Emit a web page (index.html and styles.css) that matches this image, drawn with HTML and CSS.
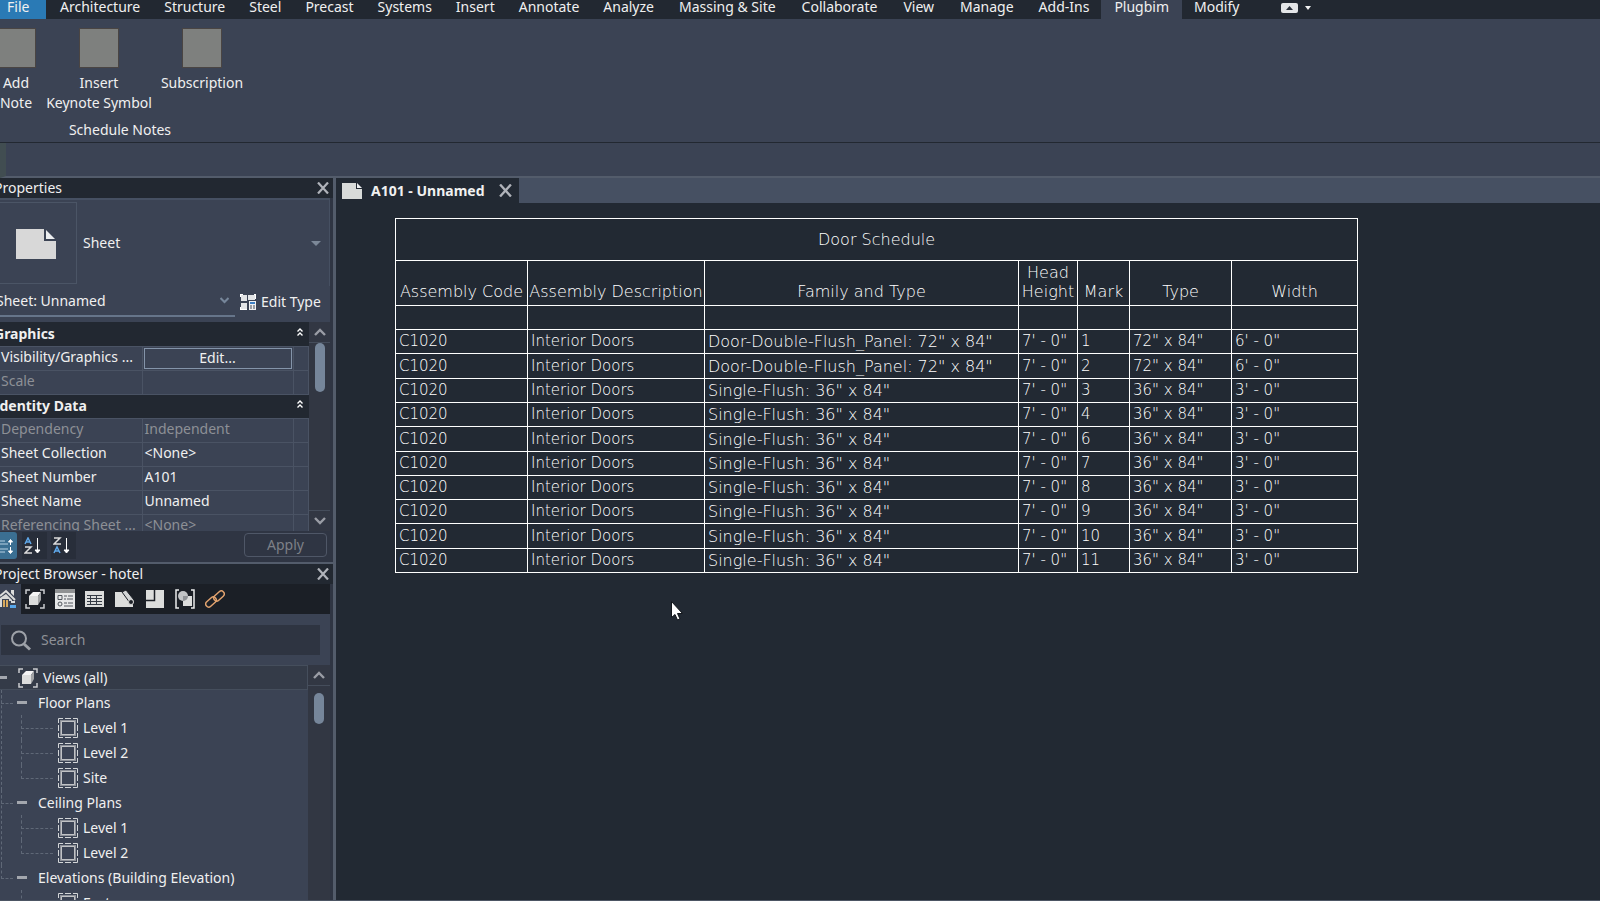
FILE: index.html
```
<!DOCTYPE html>
<html lang="en">
<head>
    <meta charset="UTF-8">
    <meta name="viewport" content="width=device-width, initial-scale=1.0">
    <title>Door Schedule - A101</title>
    <link rel="stylesheet" href="styles.css">
</head>
<body>
    <!-- Shared icons -->
    <svg class="defs" width="0" height="0">
        <symbol id="close" viewBox="0 0 12 12"><path d="M1 0.500L11 11.500M11 0.500L1 11.500" fill="none" stroke="#b0b3ba" stroke-width="2.200"/></symbol>
        <symbol id="up" viewBox="0 0 12 8"><path d="M1 7L6 2L11 7" fill="none" stroke="#9a9da5" stroke-width="2.400"/></symbol>
        <symbol id="down" viewBox="0 0 12 8"><path d="M1 1L6 6L11 1" fill="none" stroke="#9a9da5" stroke-width="2.400"/></symbol>
        <symbol id="collapse" viewBox="0 0 6 8"><path d="M0.500 3.500L3 1L5.500 3.500M0.500 7.500L3 5L5.500 7.500" fill="none" stroke="#fff" stroke-width="1.400"/></symbol>
        <symbol id="view3d" viewBox="0 0 20 20">
            <path d="M1 5V1H5M15 1H19V5M19 15V19H15M5 19H1V15" fill="none" stroke="#c9cbce" stroke-width="1.500"/>
            <path d="M4 7L8 3H16L13 7Z" fill="#f4f4f4"/>
            <path d="M4 7H13V16H4Z" fill="#dcdddc"/>
            <path d="M13 7L16 3V11L13 16Z" fill="#a2a4a6"/>
        </symbol>
        <symbol id="plan" viewBox="0 0 20 20">
            <path d="M0.500 5V0.500H5M7 0.500H13M15 0.500H19.500V5M19.500 7V13M19.500 15V19.500H15M13 19.500H7M5 19.500H0.500V15M0.500 13V7" fill="none" stroke="#d3d6d8"/>
            <path d="M3 3H17V17H3Z" fill="none" stroke="#8c9098" stroke-width="2"/>
            <path d="M3.500 3.500H16.500V16.500H3.500Z" fill="none" stroke="#c0c2c5"/>
        </symbol>
    </svg>

    <nav class="ribbon-tabs">
        <a class="file" href="#">File</a>
        <a href="#">Architecture</a>
        <a href="#">Structure</a>
        <a href="#">Steel</a>
        <a href="#">Precast</a>
        <a href="#">Systems</a>
        <a href="#">Insert</a>
        <a href="#">Annotate</a>
        <a href="#">Analyze</a>
        <a class="wide" href="#">Massing &amp; Site</a>
        <a class="wide" href="#">Collaborate</a>
        <a class="wide" href="#">View</a>
        <a class="wide" href="#">Manage</a>
        <a href="#">Add-Ins</a>
        <a class="wide active" href="#">Plugbim</a>
        <a href="#">Modify</a>
        <button class="ribbon-toggle" aria-label="Minimize ribbon">
            <svg width="30" height="10" viewBox="0 0 30 10"><rect width="17" height="10" rx="2" fill="#e4e6e8"/><path d="M5 7L8.500 3L12 7Z" fill="#2b313b"/><path d="M24 3H30L27 7Z" fill="#f2f2f2"/></svg>
        </button>
    </nav>

    <section class="ribbon">
        <div class="ribbon-buttons">
            <button class="add-note"><i class="thumb"></i>Add<br>Note</button>
            <button class="keynote"><i class="thumb"></i>Insert<br>Keynote Symbol</button>
            <button class="subscription"><i class="thumb"></i>Subscription</button>
        </div>
        <div class="ribbon-title">Schedule Notes</div>
    </section>

    <div class="options-bar"></div>

    <main class="workspace">
        <aside class="sidebar">
            <!-- Properties palette -->
            <section class="properties">
                <header class="panel-title">
                    <h2>Properties</h2>
                    <button aria-label="Close properties"><svg width="12" height="12"><use href="#close"/></svg></button>
                </header>
                <div class="panel-body">
                    <button class="type-selector">
                        <span class="preview">
                            <svg width="40" height="30" viewBox="0 0 40 30"><path d="M0 0H28V12H40V30H0Z" fill="#d8d8d8"/><path d="M30 1L39 10H30Z" fill="#eceef0"/></svg>
                        </span>
                        <span class="type-name">Sheet</span>
                        <svg width="10" height="5" viewBox="0 0 10 5"><path d="M0 0H10L5 5Z" fill="#7c8898"/></svg>
                    </button>
                    <div class="instance">
                        <div class="instance-box">
                            <select aria-label="Sheet"><option>Sheet: Unnamed</option></select>
                            <svg class="caret" width="9" height="7" viewBox="0 0 9 7"><path d="M0.500 1L4.500 5L8.500 1" fill="none" stroke="#76869a" stroke-width="2"/></svg>
                        </div>
                        <button class="edit-type">
                            <svg width="17" height="16" viewBox="0 0 17 16">
                                <path d="M1 1H7V7H1ZM8 1H15V6H8ZM1 9H7V15H1Z" fill="#e2e4e6"/>
                                <path d="M0 0H3V1H1V3H0ZM14 0H16V5H15V1H14ZM0 13H1V15H7V16H0Z" fill="#fff"/>
                                <path d="M9 7H16V16H9Z" fill="#eef0f2"/>
                                <path d="M10 8H15V10H10Z" fill="#3c7fc4"/>
                                <path d="M10 12H12M13 12H15M10 14H12M13 14H15" stroke="#444a55"/>
                            </svg>
                            Edit Type
                        </button>
                    </div>
                    <div class="scroll-area props-area">
                        <table class="props">
                            <colgroup><col class="c-name"><col class="c-value"><col class="c-mark"></colgroup>
                            <tbody>
                                <tr class="group"><th colspan="3"><div>Graphics<svg width="6" height="8"><use href="#collapse"/></svg></div></th></tr>
                                <tr><td>Visibility/Graphics ...</td><td class="has-button"><button class="edit">Edit...</button></td><td></td></tr>
                                <tr class="readonly"><td>Scale</td><td></td><td></td></tr>
                                <tr class="group"><th colspan="3"><div>Identity Data<svg width="6" height="8"><use href="#collapse"/></svg></div></th></tr>
                                <tr class="readonly"><td>Dependency</td><td>Independent</td><td></td></tr>
                                <tr><td>Sheet Collection</td><td>&lt;None&gt;</td><td></td></tr>
                                <tr><td>Sheet Number</td><td>A101</td><td></td></tr>
                                <tr><td>Sheet Name</td><td>Unnamed</td><td></td></tr>
                                <tr class="readonly"><td>Referencing Sheet ...</td><td>&lt;None&gt;</td><td></td></tr>
                            </tbody>
                        </table>
                        <div class="scrollbar">
                            <span class="arrow"><svg width="12" height="8"><use href="#up"/></svg></span>
                            <span class="handle long"></span>
                            <span class="arrow bottom"><svg width="12" height="8"><use href="#down"/></svg></span>
                        </div>
                    </div>
                </div>
                <footer class="props-footer">
                    <button class="sort on" aria-label="Sort by category">
                        <svg width="17" height="18" viewBox="0 0 17 18"><path d="M0 4H5M0 7H8M0 12H8M0 15H5" stroke="#b9d3e4" fill="none"/><path d="M10.500 3V8M8.500 5L10.500 2.500L12.500 5ZM10.500 10V15M8.500 14L10.500 16.500L12.500 14Z" stroke="#fff" fill="#fff"/></svg>
                    </button>
                    <button class="sort" aria-label="Sort ascending">
                        <svg width="18" height="18" viewBox="0 0 18 18"><path d="M1 7L4 1L7 7M2 5H6" stroke="#5fa8ea" stroke-width="1.500" fill="none"/><path d="M1 10H7L1 16H8" stroke="#dcdcdc" stroke-width="1.500" fill="none"/><path d="M13.500 1V15M11 13L13.500 16L16 13Z" stroke="#fff" fill="#fff"/></svg>
                    </button>
                    <button class="sort" aria-label="Sort descending">
                        <svg width="18" height="18" viewBox="0 0 18 18"><path d="M1 1H7L1 7H8" stroke="#dcdcdc" stroke-width="1.500" fill="none"/><path d="M1 16L4 10L7 16M2 14H6" stroke="#5fa8ea" stroke-width="1.500" fill="none"/><path d="M13.500 1V15M11 13L13.500 16L16 13Z" stroke="#fff" fill="#fff"/></svg>
                    </button>
                    <button class="apply" disabled>Apply</button>
                </footer>
            </section>

            <!-- Project browser -->
            <section class="browser">
                <header class="panel-title">
                    <h2>Project Browser - hotel</h2>
                    <button aria-label="Close project browser"><svg width="12" height="12"><use href="#close"/></svg></button>
                </header>
                <div class="browser-tools">
                    <button class="home" aria-label="All">
                        <svg width="17" height="20" viewBox="0 0 17 20"><path d="M0 7L6 2L15 11" fill="none" stroke="#dcdddc" stroke-width="2"/><path d="M11 1H14V7L11 4Z" fill="#dcdddc"/><path d="M0 9L6 5L12 11V18H0Z" fill="#d8d9d8"/><path d="M2 10H9V18H2Z" fill="#3b4353"/><path d="M3 11H5V18H3ZM6 11H8V18H6Z" fill="#d8a95c"/><path d="M9 12H17V20H9Z" fill="#3b4353"/><path d="M11 12H15V14H11Z" fill="#dcdddc"/><path d="M10 16H16V19H10Z" fill="#58a7ea"/></svg>
                    </button>
                    <button aria-label="Views"><svg width="20" height="20"><use href="#view3d"/></svg></button>
                    <button aria-label="Legends">
                        <svg width="20" height="20" viewBox="0 0 20 20"><path d="M0 0H20V20H0Z" fill="#e6e7e8"/><path d="M0 0H20V4H0Z" fill="#8f9193"/><path d="M3 6.500H7V10.500H3ZM9 7H12M13 7H18M9 10H11M12 10H18M9 14H12M13 14H18M9 17H18" fill="none" stroke="#50555c"/><circle cx="5" cy="15" r="2" fill="none" stroke="#50555c"/></svg>
                    </button>
                    <button aria-label="Schedules">
                        <svg width="20" height="20" viewBox="0 0 20 20"><path d="M0 2H19V18H0Z" fill="#dcdddc"/><path d="M2 6.500H17M2 9.500H17M2 12.500H17M2 15.500H17M5.500 6V16M11.500 6V16" stroke="#343a44" fill="none"/></svg>
                    </button>
                    <button aria-label="Sheets">
                        <svg width="20" height="20" viewBox="0 0 20 20"><path d="M0 3H8L18 15V18H0Z" fill="#dcdddc"/><path d="M7 3L11 1L19 11V15L15 14Z" fill="#d3d5d6" stroke="#1b1f26"/><circle cx="16" cy="13" r="2.500" fill="#1b1f26" stroke="#d8d9d8"/></svg>
                    </button>
                    <button aria-label="Families">
                        <svg width="20" height="20" viewBox="0 0 20 20"><path d="M1 1H19V19H1Z" fill="#dcdddc"/><path d="M1 11.500H9.500V1" fill="none" stroke="#1b1f26" stroke-width="1.500"/></svg>
                    </button>
                    <button aria-label="Groups">
                        <svg width="20" height="20" viewBox="0 0 20 20"><path d="M4 1H1V19H4M16 1H19V19H16" fill="none" stroke="#eceded" stroke-width="1.500"/><path d="M8 7H17V17H8Z" fill="#dcdddc"/><circle cx="8" cy="7" r="5" fill="#c2c4c6"/><path d="M8 12V7H13A5 5 0 0 1 8 12Z" fill="#8f9296"/></svg>
                    </button>
                    <button aria-label="Links">
                        <svg width="20" height="20" viewBox="0 0 20 20"><g fill="none" stroke="#e2a36f" stroke-width="1.500"><rect x="8" y="4" width="12" height="6" rx="3" transform="rotate(-42 14 7)"/><rect x="0" y="10" width="12" height="6" rx="3" transform="rotate(-42 6 13)"/></g></svg>
                    </button>
                </div>
                <div class="browser-body">
                    <label class="search">
                        <svg width="22" height="21" viewBox="0 0 22 21"><circle cx="8" cy="8.500" r="7" fill="none" stroke="#9da1a8" stroke-width="2"/><path d="M13 14L19 19.500" stroke="#9da1a8" stroke-width="3"/></svg>
                        <input type="text" placeholder="Search" aria-label="Search">
                    </label>
                    <div class="scroll-area tree-area">
                        <div class="tree">
                            <div class="tree-root"><i class="minus"></i><svg width="20" height="20"><use href="#view3d"/></svg>Views (all)</div>
                            <ul class="groups">
                                <li><div class="folder"><i class="minus"></i>Floor Plans</div>
                                    <ul class="views">
                                        <li><svg width="20" height="20"><use href="#plan"/></svg>Level 1</li>
                                        <li><svg width="20" height="20"><use href="#plan"/></svg>Level 2</li>
                                        <li><svg width="20" height="20"><use href="#plan"/></svg>Site</li>
                                    </ul>
                                </li>
                                <li><div class="folder"><i class="minus"></i>Ceiling Plans</div>
                                    <ul class="views">
                                        <li><svg width="20" height="20"><use href="#plan"/></svg>Level 1</li>
                                        <li><svg width="20" height="20"><use href="#plan"/></svg>Level 2</li>
                                    </ul>
                                </li>
                                <li><div class="folder"><i class="minus"></i>Elevations (Building Elevation)</div>
                                    <ul class="views">
                                        <li><svg width="20" height="20"><use href="#plan"/></svg>East</li>
                                    </ul>
                                </li>
                            </ul>
                        </div>
                        <div class="scrollbar">
                            <span class="arrow"><svg width="12" height="8"><use href="#up"/></svg></span>
                            <span class="handle short"></span>
                        </div>
                    </div>
                </div>
            </section>
        </aside>

        <!-- Drawing area -->
        <section class="document">
            <div class="doc-tabs">
                <div class="doc-tab">
                    <svg width="20" height="16" viewBox="0 0 20 16"><path d="M0 0H14V6H20V16H0Z" fill="#d8dad9"/><path d="M15 0L20 5H15Z" fill="#eceef0"/></svg>
                    <span>A101 - Unnamed</span>
                    <button aria-label="Close tab"><svg width="13" height="13"><use href="#close"/></svg></button>
                </div>
            </div>
            <div class="canvas">
                <table class="schedule">
                    <colgroup><col class="s-code"><col class="s-desc"><col class="s-family"><col class="s-head"><col class="s-mark"><col class="s-type"><col class="s-width"></colgroup>
                    <thead>
                        <tr class="title"><th colspan="7">Door Schedule</th></tr>
                        <tr class="heads"><th>Assembly Code</th><th>Assembly Description</th><th>Family and Type</th><th>Head Height</th><th>Mark</th><th>Type</th><th>Width</th></tr>
                    </thead>
                    <tbody>
                        <tr><td></td><td></td><td></td><td></td><td></td><td></td><td></td></tr>
                        <tr><td>C1020</td><td>Interior Doors</td><td class="family">Door-Double-Flush_Panel: 72" x 84"</td><td>7' - 0"</td><td>1</td><td>72" x 84"</td><td>6' - 0"</td></tr>
                        <tr><td>C1020</td><td>Interior Doors</td><td class="family">Door-Double-Flush_Panel: 72" x 84"</td><td>7' - 0"</td><td>2</td><td>72" x 84"</td><td>6' - 0"</td></tr>
                        <tr><td>C1020</td><td>Interior Doors</td><td class="family">Single-Flush: 36" x 84"</td><td>7' - 0"</td><td>3</td><td>36" x 84"</td><td>3' - 0"</td></tr>
                        <tr><td>C1020</td><td>Interior Doors</td><td class="family">Single-Flush: 36" x 84"</td><td>7' - 0"</td><td>4</td><td>36" x 84"</td><td>3' - 0"</td></tr>
                        <tr><td>C1020</td><td>Interior Doors</td><td class="family">Single-Flush: 36" x 84"</td><td>7' - 0"</td><td>6</td><td>36" x 84"</td><td>3' - 0"</td></tr>
                        <tr><td>C1020</td><td>Interior Doors</td><td class="family">Single-Flush: 36" x 84"</td><td>7' - 0"</td><td>7</td><td>36" x 84"</td><td>3' - 0"</td></tr>
                        <tr><td>C1020</td><td>Interior Doors</td><td class="family">Single-Flush: 36" x 84"</td><td>7' - 0"</td><td>8</td><td>36" x 84"</td><td>3' - 0"</td></tr>
                        <tr><td>C1020</td><td>Interior Doors</td><td class="family">Single-Flush: 36" x 84"</td><td>7' - 0"</td><td>9</td><td>36" x 84"</td><td>3' - 0"</td></tr>
                        <tr><td>C1020</td><td>Interior Doors</td><td class="family">Single-Flush: 36" x 84"</td><td>7' - 0"</td><td>10</td><td>36" x 84"</td><td>3' - 0"</td></tr>
                        <tr><td>C1020</td><td>Interior Doors</td><td class="family">Single-Flush: 36" x 84"</td><td>7' - 0"</td><td>11</td><td>36" x 84"</td><td>3' - 0"</td></tr>
                    </tbody>
                </table>
                <svg class="cursor" width="12" height="20" viewBox="0 0 12 20"><path d="M0.500 0.500V16.500L4 13.500L6.500 19L9 18L6.500 12.500H11.500Z" fill="#fff" stroke="#12161c"/></svg>
            </div>
        </section>
    </main>
</body>
</html>
```
FILE: styles.css
```
* {
    box-sizing: border-box;
}

body {
    margin: 0;
    height: 100vh;
    display: flex;
    flex-direction: column;
    overflow: hidden;
    background-color: #3b4354;
    color: #f0f0f0;
    font-family: "Noto Sans", "Open Sans", sans-serif;
    font-size: 14px;
    line-height: 20px;
    border-bottom: 1px solid #4c5563;
}

button {
    font: inherit;
    color: inherit;
    background: none;
    border: none;
    padding: 0;
    cursor: pointer;
}

svg {
    display: block;
    flex: none;
}

.defs {
    position: absolute;
}

/* Ribbon */
.ribbon-tabs {
    display: flex;
    flex: none;
    height: 19px;
    background-color: #222831;
    white-space: nowrap;
}

.ribbon-tabs a {
    padding: 0 12px;
    line-height: 14px;
    color: #f0f0f0;
    text-decoration: none;
}

.ribbon-tabs .wide {
    padding: 0 13px;
}

.ribbon-tabs .file {
    width: 46px;
    padding: 0 7px;
    margin-right: 2px;
    background-color: #2a7ab5;
}

.ribbon-tabs .active {
    background-color: #3b4354;
}

.ribbon-toggle {
    margin-left: 30px;
    padding-bottom: 4px;
}

.ribbon {
    flex: none;
    height: 124px;
    padding-top: 9px;
    border-bottom: 1px solid #222831;
}

.ribbon-buttons {
    display: flex;
    align-items: flex-start;
    height: 92px;
}

.ribbon-buttons button {
    display: flex;
    flex-direction: column;
    align-items: center;
    white-space: nowrap;
}

.add-note {
    width: 40px;
    margin-left: -4px;
}

.keynote {
    width: 126px;
}

.subscription {
    width: 80px;
}

.thumb {
    width: 40px;
    height: 40px;
    margin-bottom: 5px;
    background-color: #7e807e;
    border: 1px solid #4a4543;
}

.ribbon-title {
    width: 240px;
    text-align: center;
}

.options-bar {
    flex: none;
    height: 35px;
    border-left: 6px solid #414d51;
    border-bottom: 2px solid #535c6b;
}

/* Palettes */
.workspace {
    flex: 1;
    display: flex;
    min-height: 0;
}

.sidebar {
    flex: none;
    width: 336px;
    display: flex;
    flex-direction: column;
    border-right: 3px solid #535c6b;
    background-color: #2f3543;
}

.panel-title {
    display: flex;
    justify-content: space-between;
    align-items: center;
    height: 20px;
    padding-right: 4px;
    background-color: #222831;
}

.panel-title h2 {
    margin: 0 0 0 -6px;
    font-size: 14px;
    font-weight: normal;
}

.panel-body, .browser-body {
    margin-right: 3px;
    background-color: #3b4354;
}

.type-selector {
    display: flex;
    align-items: center;
    width: 100%;
    height: 88px;
    padding: 3px 8px 3px 0;
    border-top: 2px solid #465062;
    border-right: 1px solid #465062;
    text-align: left;
}

.preview {
    width: 77px;
    height: 82px;
    padding: 26px 0 0 16px;
    border: 1px solid #4b5566;
    border-left: none;
}

.type-name {
    flex: 1;
    padding-left: 6px;
}

.instance {
    display: flex;
    height: 36px;
}

.instance-box {
    display: flex;
    align-items: center;
    width: 235px;
    height: 31px;
    padding-right: 6px;
    border-bottom: 2px solid #66758a;
}

.instance-box select {
    flex: 1;
    min-width: 0;
    margin-left: -4px;
    padding: 0;
    appearance: none;
    border: none;
    background: none;
    color: inherit;
    font: inherit;
}

.edit-type {
    display: flex;
    align-items: center;
    gap: 4px;
    height: 31px;
    margin-left: 5px;
    white-space: nowrap;
}

.scroll-area {
    display: flex;
    overflow: hidden;
}

.props-area {
    height: 209px;
}

.props {
    width: 309px;
    table-layout: fixed;
    border-collapse: collapse;
}

.c-name {
    width: 142px;
}

.c-value {
    width: 151px;
}

.props td {
    height: 24px;
    padding: 0 0 2px 1px;
    border: 1px solid #4a5364;
    border-left: none;
    line-height: 20px;
    white-space: nowrap;
}

.props td + td {
    padding-left: 2px;
}

.props .has-button {
    padding: 0 1px;
}

.props .edit {
    display: block;
    width: 100%;
    height: 21px;
    line-height: 18px;
    border: 1px solid #8494a9;
}

.props .readonly td {
    color: #8d9096;
}

.props .group th {
    height: 24px;
    padding: 0 6px 0 0;
    background-color: #222831;
    text-align: left;
}

.props .group div {
    display: flex;
    justify-content: space-between;
    margin-left: -6px;
}

.props .group svg {
    margin-top: 4px;
}

.scrollbar {
    flex: 1;
    display: flex;
    flex-direction: column;
    align-items: center;
    background-color: #323743;
}

.arrow {
    display: flex;
    justify-content: center;
    align-items: center;
    width: 100%;
    height: 21px;
    border-bottom: 1px solid #454d5b;
}

.arrow.bottom {
    margin-top: auto;
    border-bottom: none;
    border-top: 1px solid #454d5b;
}

.handle {
    width: 10px;
    border-radius: 5px;
    background-color: #76869a;
}

.handle.long {
    height: 49px;
}

.handle.short {
    height: 31px;
    margin-top: 7px;
}

.props-footer {
    display: flex;
    gap: 4px;
    height: 33px;
    padding-top: 1px;
    border-bottom: 2px solid #535c6b;
}

.sort {
    display: flex;
    align-items: center;
    width: 25px;
    height: 27px;
    padding-left: 2px;
    background-color: #282e3a;
}

.sort.on {
    width: 17px;
    margin-right: 1px;
    padding-left: 0;
    background-color: #3b6f92;
    border-radius: 0 3px 3px 0;
}

.apply {
    width: 83px;
    height: 24px;
    margin-top: 1px;
    margin-left: auto;
    margin-right: 6px;
    border: 1px solid #4f5767;
    border-radius: 4px;
    color: #7d8087;
}

/* Project browser */
.browser {
    flex: 1;
    display: flex;
    flex-direction: column;
    min-height: 0;
}

.browser-tools {
    display: flex;
    gap: 10px;
    height: 30px;
    margin-right: 3px;
    background-color: #1b1f26;
}

.browser-tools .home {
    width: 21px;
    margin-right: -6px;
    background-color: #3b4354;
}

.browser-body {
    flex: 1;
    display: flex;
    flex-direction: column;
    min-height: 0;
}

.search {
    display: flex;
    align-items: center;
    flex: none;
    height: 30px;
    margin: 11px 10px 10px 1px;
    padding-left: 10px;
    gap: 8px;
    background-color: #2e3441;
}

.search input {
    flex: 1;
    min-width: 0;
    padding: 0;
    border: none;
    outline: none;
    background: none;
    color: #f0f0f0;
    font: inherit;
}

.search input::placeholder {
    color: #8d9096;
    opacity: 1;
}

.tree-area {
    flex: 1;
    min-height: 0;
}

.tree {
    width: 308px;
}

.tree-root {
    display: flex;
    align-items: center;
    gap: 5px;
    height: 25px;
    background-color: #343b48;
    border: 1px solid #454e5c;
    border-left: none;
}

.tree-root .minus {
    width: 7px;
    margin-right: 6px;
}

.minus {
    width: 10px;
    height: 3px;
    background-color: #a3a7ae;
}

.tree ul {
    list-style: none;
    margin: 0;
    padding: 0;
}

.tree li {
    position: relative;
}

.folder {
    display: flex;
    align-items: center;
    gap: 11px;
    height: 25px;
    padding-left: 17px;
}

.views li {
    display: flex;
    align-items: center;
    gap: 5px;
    height: 25px;
    padding-left: 58px;
}

/* Dashed guide lines of the tree */
.tree li::before, .tree li::after {
    content: "";
    position: absolute;
    top: 0;
    left: 1px;
    border-left: 1px dashed #5f6877;
}

.tree li::before {
    width: 11px;
    height: 13px;
    border-bottom: 1px dashed #5f6877;
}

.tree li::after {
    height: 100%;
}

.tree .views li::before, .tree .views li::after {
    left: 21px;
}

.tree .views li::before {
    width: 31px;
}

.tree li:last-child::after {
    display: none;
}

/* Drawing area */
.document {
    flex: 1;
    min-width: 0;
    display: flex;
    flex-direction: column;
    background-color: #222933;
}

.doc-tabs {
    flex: none;
    height: 25px;
    display: flex;
    background-color: #465062;
}

.doc-tab {
    display: flex;
    align-items: center;
    gap: 9px;
    padding: 0 7px 0 6px;
    background-color: #222933;
    font-weight: bold;
    white-space: nowrap;
}

.doc-tab button {
    margin-left: 5px;
}

.canvas {
    position: relative;
    flex: 1;
    padding: 15px 0 0 59px;
}

.schedule {
    width: 963px;
    table-layout: fixed;
    border-collapse: collapse;
    color: #fff;
    font-family: "DejaVu Sans Light", "DejaVu Sans", sans-serif;
    font-size: 15px;
    font-weight: 200;
    line-height: 19px;
}

.s-code { width: 132px; }
.s-desc { width: 177px; }
.s-family { width: 314px; }
.s-head { width: 59px; }
.s-mark { width: 52px; }
.s-type { width: 102px; }
.s-width { width: 126px; }

.schedule th, .schedule td {
    border: 1px solid #fff;
    padding: 0 3px;
    font-weight: 200;
}

.schedule th, .schedule .family {
    font-size: 16px;
}

.schedule td {
    height: 24px;
    text-align: left;
    white-space: nowrap;
}

.schedule tbody tr:nth-child(3) td,
.schedule tbody tr:nth-child(6) td,
.schedule tbody tr:nth-child(10) td {
    height: 25px;
}

.schedule .title th {
    height: 42px;
}

.schedule .heads th {
    height: 45px;
    padding: 0;
    padding-bottom: 4px;
    vertical-align: bottom;
}

.cursor {
    position: absolute;
    left: 335px;
    top: 398px;
}
```
